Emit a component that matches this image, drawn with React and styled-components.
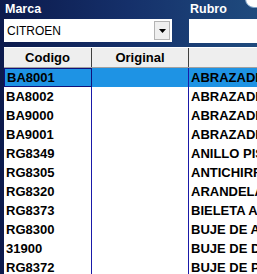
import styled, { createGlobalStyle } from "styled-components";

const GlobalStyle = createGlobalStyle`
  html, body {
    margin: 0;
    padding: 0;
    overflow: hidden;
  }
`;

const rows = [
  { codigo: "BA8001", rubro: "ABRAZADERA", selected: true },
  { codigo: "BA8002", rubro: "ABRAZADERA" },
  { codigo: "BA9000", rubro: "ABRAZADERA" },
  { codigo: "BA9001", rubro: "ABRAZADERA" },
  { codigo: "RG8349", rubro: "ANILLO PISTON" },
  { codigo: "RG8305", rubro: "ANTICHIRRIDO" },
  { codigo: "RG8320", rubro: "ARANDELA" },
  { codigo: "RG8373", rubro: "BIELETA ANTI" },
  { codigo: "RG8300", rubro: "BUJE DE AMORT" },
  { codigo: "31900", rubro: "BUJE DE DIREC" },
  { codigo: "RG8372", rubro: "BUJE DE PARR" },
];

const App = () => {
  return (
    <>
      <GlobalStyle />
      <Screen>
        <CornerButton />
        <Filters>
          <Field $width={168}>
            <Label>Marca</Label>
            <Combo>
              <ComboText>CITROEN</ComboText>
              <DropButton>
                <svg width="7" height="4" viewBox="0 0 7 4">
                  <path d="M0 0h7L3.5 4z" fill="#000" />
                </svg>
              </DropButton>
            </Combo>
          </Field>
          <Field $width={80}>
            <Label>Rubro</Label>
            <TextBox />
          </Field>
        </Filters>
        <Grid>
          <HeaderRow>
            <HeaderCell>Codigo</HeaderCell>
            <HeaderCell>Original</HeaderCell>
            <HeaderCell />
          </HeaderRow>
          {rows.map((r) => (
            <Row key={r.codigo} $selected={r.selected}>
              <Cell $focus={r.selected}>{r.codigo}</Cell>
              <Cell />
              <Cell>{r.rubro}</Cell>
            </Row>
          ))}
        </Grid>
      </Screen>
    </>
  );
};

const Screen = styled.div`
  position: relative;
  width: 257px;
  height: 274px;
  overflow: hidden;
  background: linear-gradient(90deg, #0c1a4c 0%, #15306a 50%, #1f4b7e 100%);
  padding-left: 4px;
  box-sizing: border-box;
  font-family: "Liberation Sans", Arial, sans-serif;
`;

const CornerButton = styled.div`
  position: absolute;
  left: 245px;
  top: -14px;
  width: 30px;
  height: 20px;
  border-radius: 9px;
  background: #ffffff;
  border: 1px solid #7fa4c8;
`;

const Filters = styled.div`
  display: flex;
  gap: 17px;
  padding-top: 3px;
`;

const Field = styled.div`
  display: flex;
  flex-direction: column;
  width: ${(p) => p.$width}px;
  flex-shrink: 0;
`;

const Label = styled.div`
  color: #ffffff;
  font-weight: bold;
  font-size: 12.5px;
  line-height: 13px;
  height: 16px;
  padding-left: 1px;
`;

const Combo = styled.div`
  display: flex;
  align-items: center;
  height: 23px;
  background: #ffffff;
  box-sizing: border-box;
  padding: 0 2px 0 3px;
`;

const ComboText = styled.div`
  flex: 1;
  font-size: 12px;
  color: #000;
  padding-top: 1px;
`;

const DropButton = styled.div`
  display: flex;
  align-items: center;
  justify-content: center;
  width: 16px;
  height: 19px;
  box-sizing: border-box;
  background: #efefef;
  border: 1px solid #b4b4b4;
`;

const TextBox = styled.div`
  height: 24px;
  background: #ffffff;
`;

const Grid = styled.div`
  margin-top: 4px;
  background: #ffffff;
`;

const HeaderRow = styled.div`
  display: grid;
  grid-template-columns: 88px 97px 1fr;
  height: 21px;
  background: #eeeeee;
  border-top: 1px solid #ffffff;
  border-bottom: 1px solid #a0a0a0;
  box-sizing: border-box;
`;

const HeaderCell = styled.div`
  font-weight: bold;
  font-size: 13px;
  color: #000;
  text-align: center;
  line-height: 19px;
  border-right: 1px solid #404040;
  &:last-child {
    border-right: none;
  }
`;

const Row = styled.div`
  display: grid;
  grid-template-columns: 88px 97px 1fr;
  height: 19px;
  background: ${(p) => (p.$selected ? "#1e93e4" : "#ffffff")};
`;

const Cell = styled.div`
  font-weight: bold;
  font-size: 13px;
  color: #000;
  line-height: 19px;
  padding-left: 2px;
  white-space: nowrap;
  overflow: hidden;
  box-sizing: border-box;
  border-right: 1px solid #1a1aa8;
  border: ${(p) => (p.$focus ? "1px solid #10107a" : "")};
  line-height: ${(p) => (p.$focus ? "17px" : "19px")};
  &:last-child {
    border-right: none;
  }
`;

export default App;
